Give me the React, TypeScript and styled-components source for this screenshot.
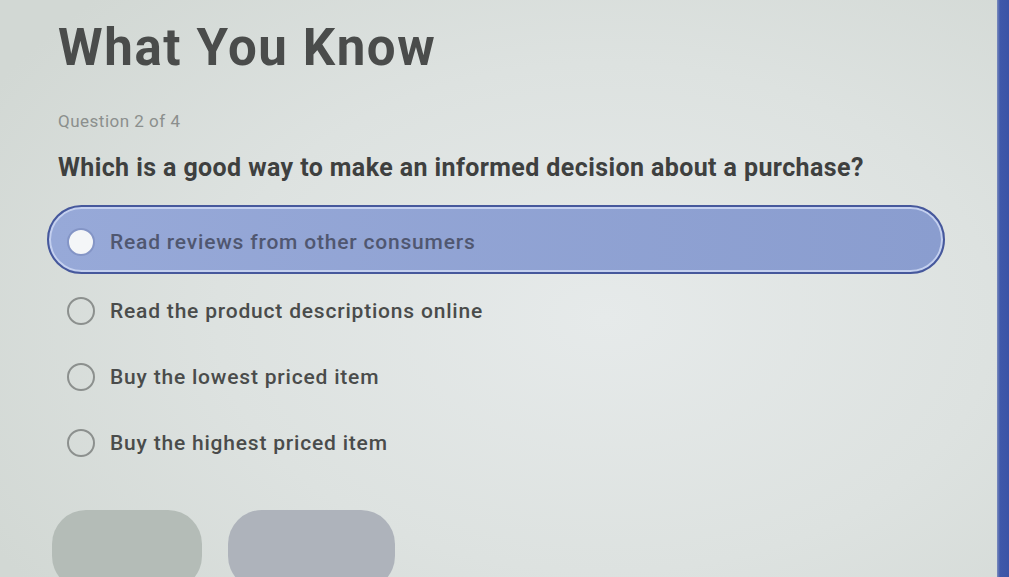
import React from "react";
import styled, { createGlobalStyle } from "styled-components";

const GlobalStyle = createGlobalStyle`
  html, body {
    margin: 0;
    padding: 0;
    width: 1009px;
    height: 577px;
    overflow: hidden;
  }
  #root {
    width: 1009px;
    height: 577px;
  }
  * { box-sizing: border-box; }
`;

const Screen = styled.div`
  display: flex;
  width: 1009px;
  height: 577px;
  overflow: hidden;
  font-family: Roboto, "Liberation Sans", Arial, sans-serif;
  background:
    radial-gradient(ellipse 70% 80% at 60% 55%, #e6eaea 0%, #dde2e0 55%, #d2d8d4 100%);
`;

const Content = styled.main`
  flex: 1;
  display: flex;
  flex-direction: column;
  padding: 18px 52px 0 58px;
`;

const EdgeBar = styled.div`
  width: 12px;
  flex: none;
  background: linear-gradient(to right, #7c8cbd 0px, #3f58aa 3px, #3b54a6 100%);
`;

const Title = styled.h1`
  margin: 0;
  font-size: 51px;
  font-weight: 700;
  line-height: 60px;
  color: #4a4c4b;
  letter-spacing: 1.6px;
`;

const Counter = styled.div`
  margin-top: 33px;
  font-size: 17px;
  line-height: 20px;
  letter-spacing: 0.5px;
  color: #8b8f8d;
`;

const Prompt = styled.h2`
  margin: 21px 0 0;
  font-size: 25px;
  font-weight: 700;
  line-height: 32px;
  letter-spacing: 0.4px;
  color: #3e403f;
`;

const Choices = styled.div`
  display: flex;
  flex-direction: column;
  margin: 21px 0 0 -11px;
  width: 898px;
`;

const Choice = styled.label<{ $selected?: boolean }>`
  display: flex;
  align-items: center;
  gap: 15px;
  height: ${(p) => (p.$selected ? "69px" : "66px")};
  padding: ${(p) => (p.$selected ? "4px 0 0 18px" : "0 0 0 20px")};
  border-radius: 35px;
  font-size: 21px;
  font-weight: 500;
  letter-spacing: 0.8px;
  color: ${(p) => (p.$selected ? "#505770" : "#4a4c4b")};
  background: ${(p) =>
    p.$selected ? "linear-gradient(to right, #97a9d8, #8a9dcf)" : "transparent"};
  border: ${(p) => (p.$selected ? "2px solid #46589c" : "none")};
  box-shadow: ${(p) => (p.$selected ? "inset 0 0 0 2px #c4d0ef" : "none")};
  margin-bottom: ${(p) => (p.$selected ? "4px" : "0")};
`;

const Radio = styled.span<{ $selected?: boolean }>`
  width: 28px;
  height: 28px;
  flex: none;
  border-radius: 50%;
  background: ${(p) => (p.$selected ? "#f4f6f8" : "transparent")};
  border: ${(p) => (p.$selected ? "2px solid #8495c6" : "2px solid #8c908e")};
`;

const Actions = styled.div`
  display: flex;
  gap: 26px;
  margin: 34px 0 0 -6px;
`;

const ActionButton = styled.button<{ $tone: string; $width: number }>`
  width: ${(p) => p.$width}px;
  height: 80px;
  border: none;
  border-radius: 34px;
  background: ${(p) => p.$tone};
  font: inherit;
`;

const options = [
  "Read reviews from other consumers",
  "Read the product descriptions online",
  "Buy the lowest priced item",
  "Buy the highest priced item",
];

export default function App() {
  const selected = 0;
  return (
    <>
      <GlobalStyle />
      <Screen>
        <Content>
          <Title>What You Know</Title>
          <Counter>Question 2 of 4</Counter>
          <Prompt>Which is a good way to make an informed decision about a purchase?</Prompt>
          <Choices>
            {options.map((text, i) => (
              <Choice key={text} $selected={i === selected}>
                <Radio $selected={i === selected} />
                {text}
              </Choice>
            ))}
          </Choices>
          <Actions>
            <ActionButton $tone="#b4bcb7" $width={150} aria-label="Back" />
            <ActionButton $tone="#aeb3bb" $width={167} aria-label="Submit" />
          </Actions>
        </Content>
        <EdgeBar />
      </Screen>
    </>
  );
}
